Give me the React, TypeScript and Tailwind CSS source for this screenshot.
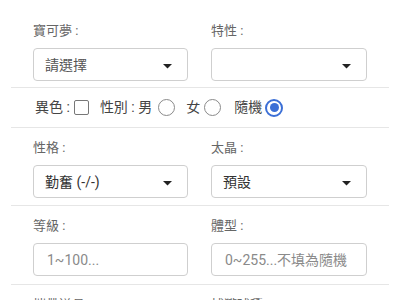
import React from "react";

const font = { fontFamily: 'Roboto, "Noto Sans CJK TC", sans-serif' };

function Caret() {
  return (
    <svg width="9" height="5" viewBox="0 0 9 5" className="mt-[3px] shrink-0">
      <path d="M0 0 L9 0 L4.5 4.5 Z" fill="#222" />
    </svg>
  );
}

function Select({ value, muted }: { value: string; muted?: boolean }) {
  return (
    <div className="h-[33px] border border-[#cfcfcf] rounded-[4px] flex items-center justify-between pl-[11px] pr-[15px] bg-white">
      <span className={`text-[14px] leading-none ${muted ? "text-[#555]" : "text-[#333]"}`}>{value}</span>
      <Caret />
    </div>
  );
}

function Input({ placeholder }: { placeholder: string }) {
  return (
    <div className="h-[33px] border border-[#cfcfcf] rounded-[4px] flex items-center pl-[13px] bg-white">
      <span className="text-[14px] leading-none text-[#8a8a8a]">{placeholder}</span>
    </div>
  );
}

function Label({ children }: { children: React.ReactNode }) {
  return <div className="h-[18px] leading-[18px] text-[13px] text-[#666] mb-[8px]">{children}</div>;
}

function Radio({ checked }: { checked?: boolean }) {
  if (checked) {
    return (
      <span className="w-[18px] h-[18px] rounded-full border-2 border-[#3b6fd6] flex items-center justify-center">
        <span className="w-[9px] h-[9px] rounded-full bg-[#3b6fd6]" />
      </span>
    );
  }
  return <span className="w-[17px] h-[17px] rounded-full border border-[#8a8a8a]" />;
}

export default function App() {
  return (
    <div className="w-[400px] h-[300px] overflow-hidden bg-white" style={font}>
      <div className="mx-[11px]">
        <div className="flex gap-[23px] pl-[22px] pt-[22px] pb-[6px] border-b border-[#e6e6e6]">
          <div className="w-[155px]">
            <Label>寶可夢 :</Label>
            <Select value="請選擇" muted />
          </div>
          <div className="w-[156px]">
            <Label>特性 :</Label>
            <Select value="" />
          </div>
        </div>

        <div className="h-[40px] flex items-center pl-[24px] border-b border-[#e6e6e6] text-[14px] text-[#444]">
          <span>異色 :</span>
          <span className="ml-[4px] w-[15px] h-[15px] border border-[#777] rounded-[2px]" />
          <span className="ml-[11px]">性別 : 男</span>
          <span className="ml-[6px] flex"><Radio /></span>
          <span className="ml-[11px]">女</span>
          <span className="ml-[4px] flex"><Radio /></span>
          <span className="ml-[13px]">隨機</span>
          <span className="ml-[3px] flex"><Radio checked /></span>
        </div>

        <div className="flex gap-[23px] pl-[22px] pt-[11px] pb-[7px] border-b border-[#e6e6e6]">
          <div className="w-[155px]">
            <Label>性格 :</Label>
            <Select value="勤奮 (-/-)" />
          </div>
          <div className="w-[156px]">
            <Label>太晶 :</Label>
            <Select value="預設" />
          </div>
        </div>

        <div className="flex gap-[23px] pl-[22px] pt-[11px] pb-[8px] border-b border-[#e6e6e6]">
          <div className="w-[155px]">
            <Label>等級 :</Label>
            <Input placeholder="1~100..." />
          </div>
          <div className="w-[156px]">
            <Label>體型 :</Label>
            <Input placeholder="0~255...不填為隨機" />
          </div>
        </div>

        <div className="flex gap-[23px] pl-[22px] pt-[11px]">
          <div className="w-[155px]">
            <Label>攜帶道具 :</Label>
          </div>
          <div className="w-[156px]">
            <Label>捕獲球種 :</Label>
          </div>
        </div>
      </div>
    </div>
  );
}
